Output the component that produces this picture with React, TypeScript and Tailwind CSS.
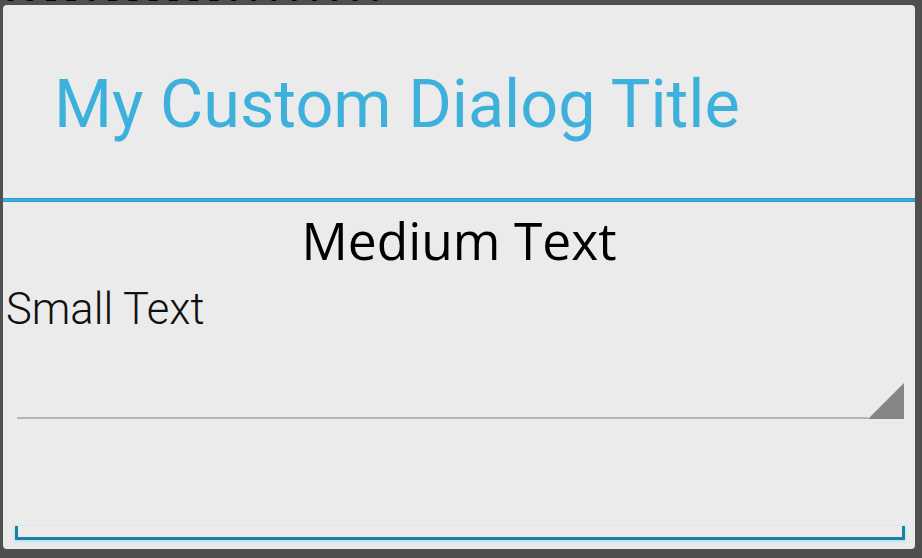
import React from "react";

export default function App() {
  return (
    <div className="w-[922px] h-[558px] bg-[#4f4f4f] overflow-hidden flex flex-col">
      {/* strip of the activity behind the dialog */}
      <div className="h-[5px] overflow-hidden pl-[4px] relative">
        <div className="text-[22px] leading-[22px] text-black tracking-[7px] -mt-[17px] whitespace-nowrap" style={{ fontFamily: '"DejaVu Sans Mono", monospace' }}>
          8322011111100000000
        </div>
      </div>

      <div className="ml-[3px] w-[912px] h-[544px] bg-[#ebebeb] rounded-[4px] flex flex-col">
        {/* title */}
        <div className="h-[193px] flex items-center pl-[51px]">
          <span className="text-[66.5px] leading-none text-[#3db1db] pt-[6px]" style={{ fontFamily: "Roboto, sans-serif" }}>
            My Custom Dialog Title
          </span>
        </div>
        <div className="h-[4px] bg-[#38b0dc] border-y border-[#2f9ccb]" />

        {/* body */}
        <div className="text-center text-black text-[51.5px] leading-none mt-[13px]" style={{ fontFamily: '"Open Sans", sans-serif' }}>
          Medium Text
        </div>
        <div className="pl-[3px] mt-[21px] text-[43.5px] leading-none text-[#111]" style={{ fontFamily: "Roboto, sans-serif", fontWeight: 300 }}>
          Small Text
        </div>

        {/* edit text with spinner corner */}
        <div className="mt-[52px] ml-[14px] mr-[11px] flex items-end">
          <div className="flex-1 h-[2px] bg-[#b5b5b5]" />
          <svg width="36" height="36" viewBox="0 0 36 36" className="block">
            <polygon points="0,36 36,0 36,36" fill="#858585" />
          </svg>
        </div>

        {/* button bracket */}
        <div className="mt-[107px] ml-[12px] mr-[10px] h-[14px] border-x-[3px] border-b-[3px] border-[#1d7ea6] shadow-[0_1px_3px_rgba(80,220,255,0.6)]" />
      </div>
    </div>
  );
}
